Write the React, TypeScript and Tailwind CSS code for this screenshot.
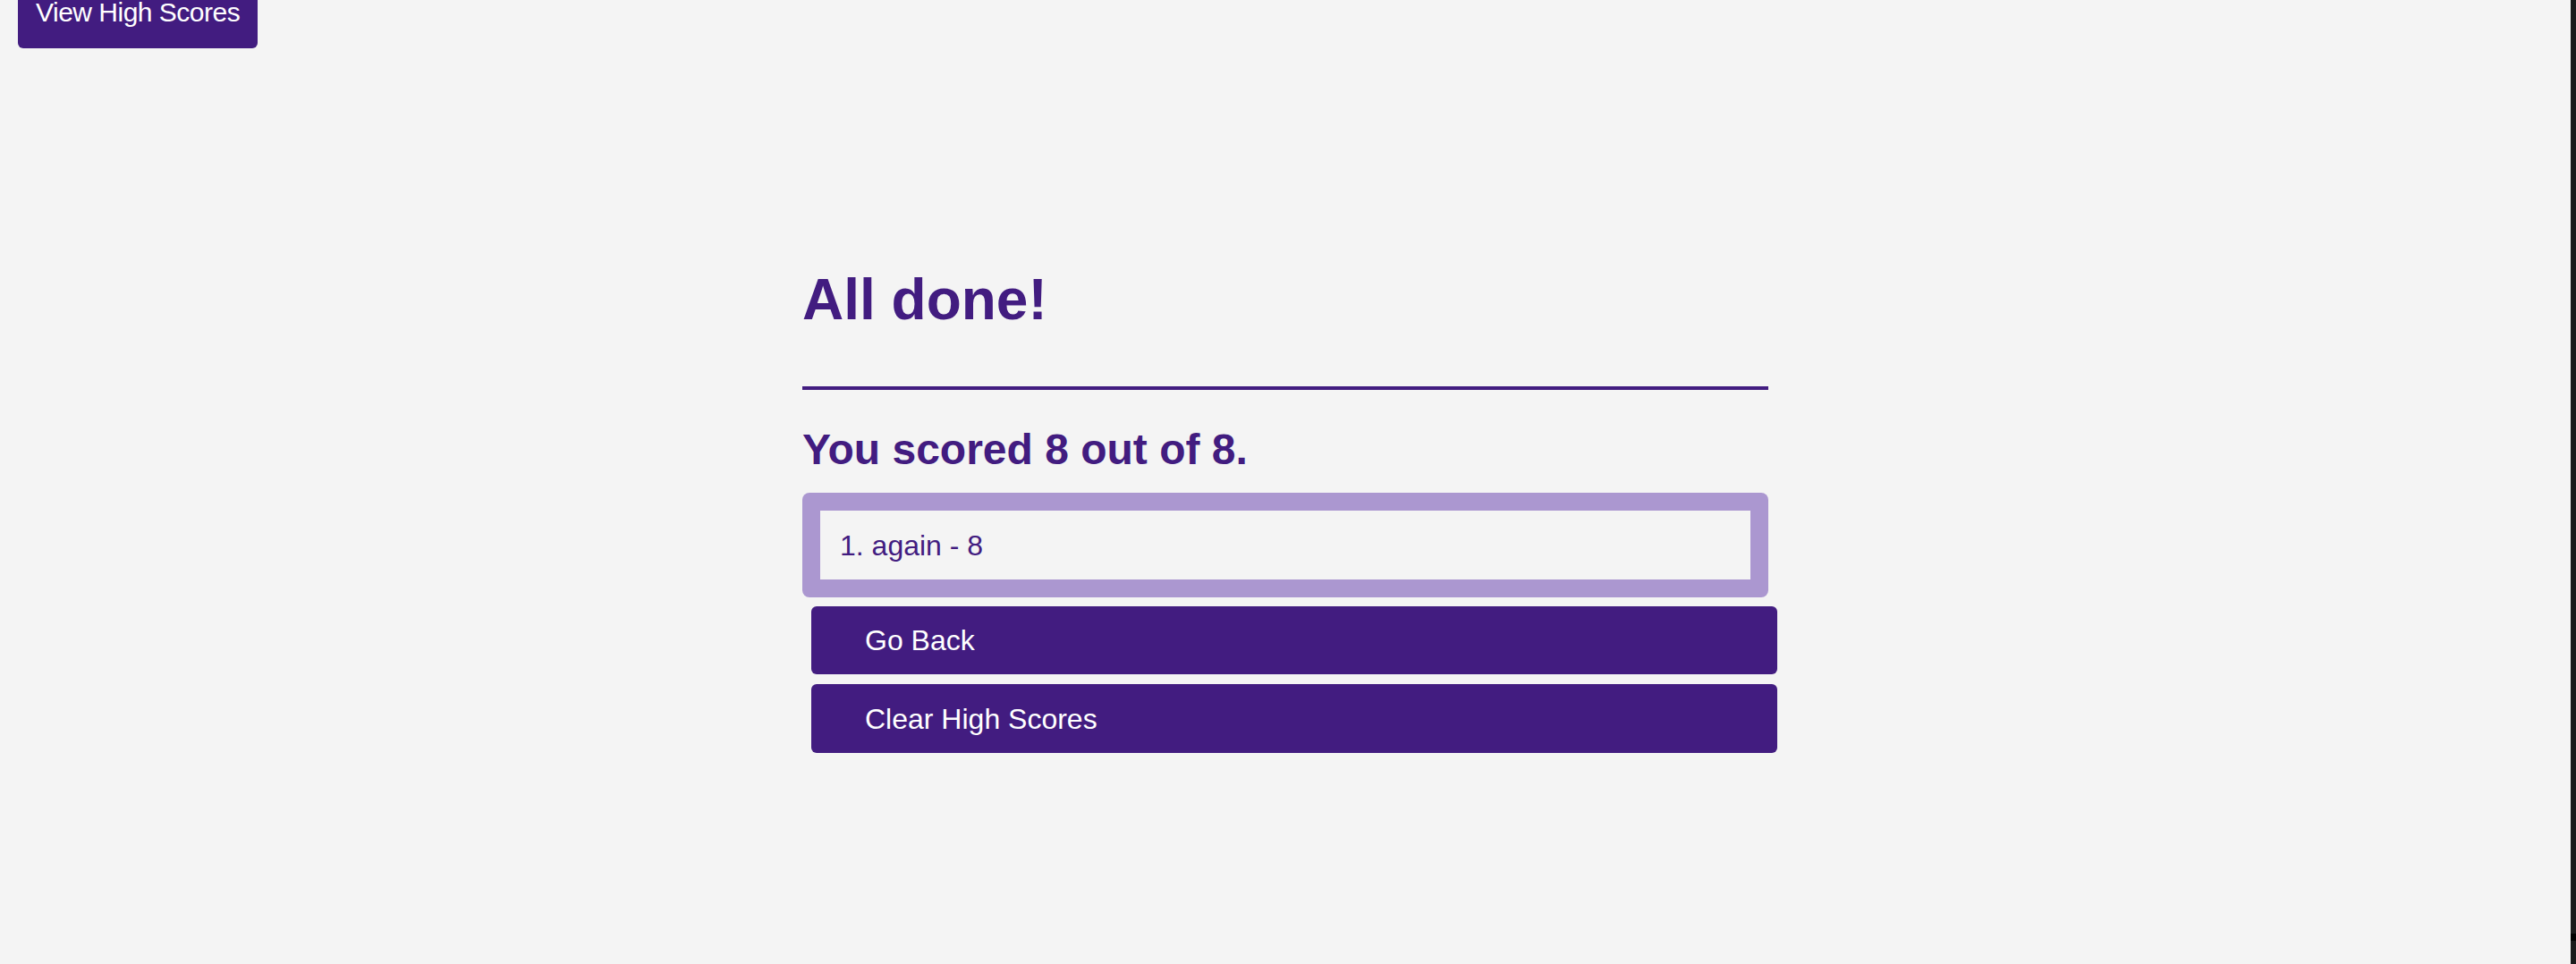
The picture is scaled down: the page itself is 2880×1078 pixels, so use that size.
import React from "react";

export default function App() {
  const font = { fontFamily: '"Liberation Sans", Arial, Helvetica, sans-serif' };
  return (
    <div className="flex h-[1078px] w-[2880px] overflow-hidden bg-[#f4f4f4]" style={font}>
      <div className="flex flex-1 flex-col">
        <div className="flex">
          <button className="-mt-[26px] ml-[20px] rounded-[6px] bg-[#421c80] px-[20px] pt-[22px] pb-[22px] text-[30px] leading-[36px] tracking-[-0.5px] text-white">
            View High Scores
          </button>
        </div>
        <div className="mx-auto mt-[244px] flex w-[1080px] flex-col">
          <h1 className="text-[64px] font-bold leading-[74px] text-[#421c80]">All done!</h1>
          <div className="mt-[60px] h-[4px] w-full bg-[#421c80]" />
          <h2 className="mt-[39px] text-[48px] font-bold leading-[56px] text-[#421c80]">
            You scored 8 out of 8.
          </h2>
          <div className="mt-[20px] rounded-[8px] bg-[#ab97d0] p-[20px]">
            <div className="flex h-[77px] items-center bg-[#f4f4f4] pl-[22px] text-[32px] text-[#421c80]">
              1. again - 8
            </div>
          </div>
          <button className="ml-[10px] mt-[10px] flex h-[76px] w-[1080px] items-center rounded-[6px] bg-[#421c80] pl-[60px] text-[32px] text-white">
            Go Back
          </button>
          <button className="ml-[10px] mt-[11px] flex h-[77px] w-[1080px] items-center rounded-[6px] bg-[#421c80] pl-[60px] text-[32px] text-white">
            Clear High Scores
          </button>
        </div>
      </div>
      <div className="flex h-full w-[6px] flex-col bg-[#1b1b1b]">
        <div className="mt-[1044px] h-[8px] w-full bg-black" />
      </div>
    </div>
  );
}
